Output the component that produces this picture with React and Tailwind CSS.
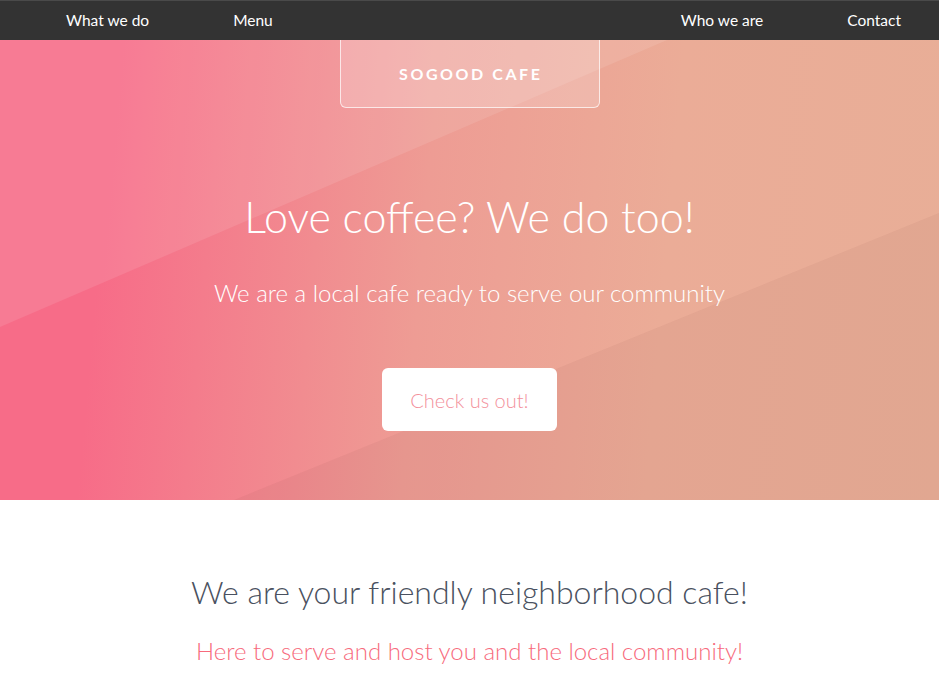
import React from 'react';

const navLeft = ['What we do', 'Menu'];
const navRight = ['Who we are', 'Contact'];

export default function App() {
  return (
    <div className="min-h-screen bg-white font-['Lato',sans-serif]">
      {/* Barra de navegação */}
      <nav className="relative z-10 h-10 bg-[#333333] border-t border-[#4a4a4a] flex items-center justify-between pl-[24px] text-white text-[15.5px]">
        <ul className="flex">
          {navLeft.map((item) => (
            <li key={item} className="px-[42px]">{item}</li>
          ))}
        </ul>
        <ul className="flex">
          {navRight.map((item) => (
            <li key={item} className="px-[42px] last:pr-[38px]">{item}</li>
          ))}
        </ul>
      </nav>

      {/* Hero */}
      <header className="relative h-[460px] overflow-hidden bg-[linear-gradient(95deg,#f76c88_12%,#ee9c94_45%,#ebac97_70%,#e8ae97_100%)]">
        <svg className="absolute inset-0 w-full h-full" viewBox="0 0 939 460" preserveAspectRatio="none">
          <polygon points="0,0 667,0 0,287" fill="#ffffff" fillOpacity="0.1" />
          <polygon points="939,173 939,460 234,460" fill="#6b1e1e" fillOpacity="0.05" />
        </svg>
        <div className="relative flex flex-col items-center">
          <div className="w-[260px] h-[68px] flex items-center justify-center border border-t-0 border-white/70 rounded-b-md bg-white/20">
            <span className="text-white font-bold text-[16px] tracking-[0.16em] pl-[0.16em]">SOGOOD CAFE</span>
          </div>
          <h1 className="mt-[87px] text-white font-light text-[43px] leading-none">Love coffee? We do too!</h1>
          <p className="mt-[43px] text-white font-light text-[24px] leading-none">We are a local cafe ready to serve our community</p>
          <button className="mt-[63px] w-[175px] h-[63px] bg-white rounded-md text-[#f3909b] font-light text-[20px]">Check us out!</button>
        </div>
      </header>

      {/* Sobre */}
      <section className="pt-[76px] pb-10 text-center">
        <h2 className="text-[#4a5160] font-light text-[32px] leading-none">We are your friendly neighborhood cafe!</h2>
        <p className="mt-[31px] text-[#f76a7c] font-light text-[24px] leading-none">Here to serve and host you and the local community!</p>
      </section>
    </div>
  );
}
